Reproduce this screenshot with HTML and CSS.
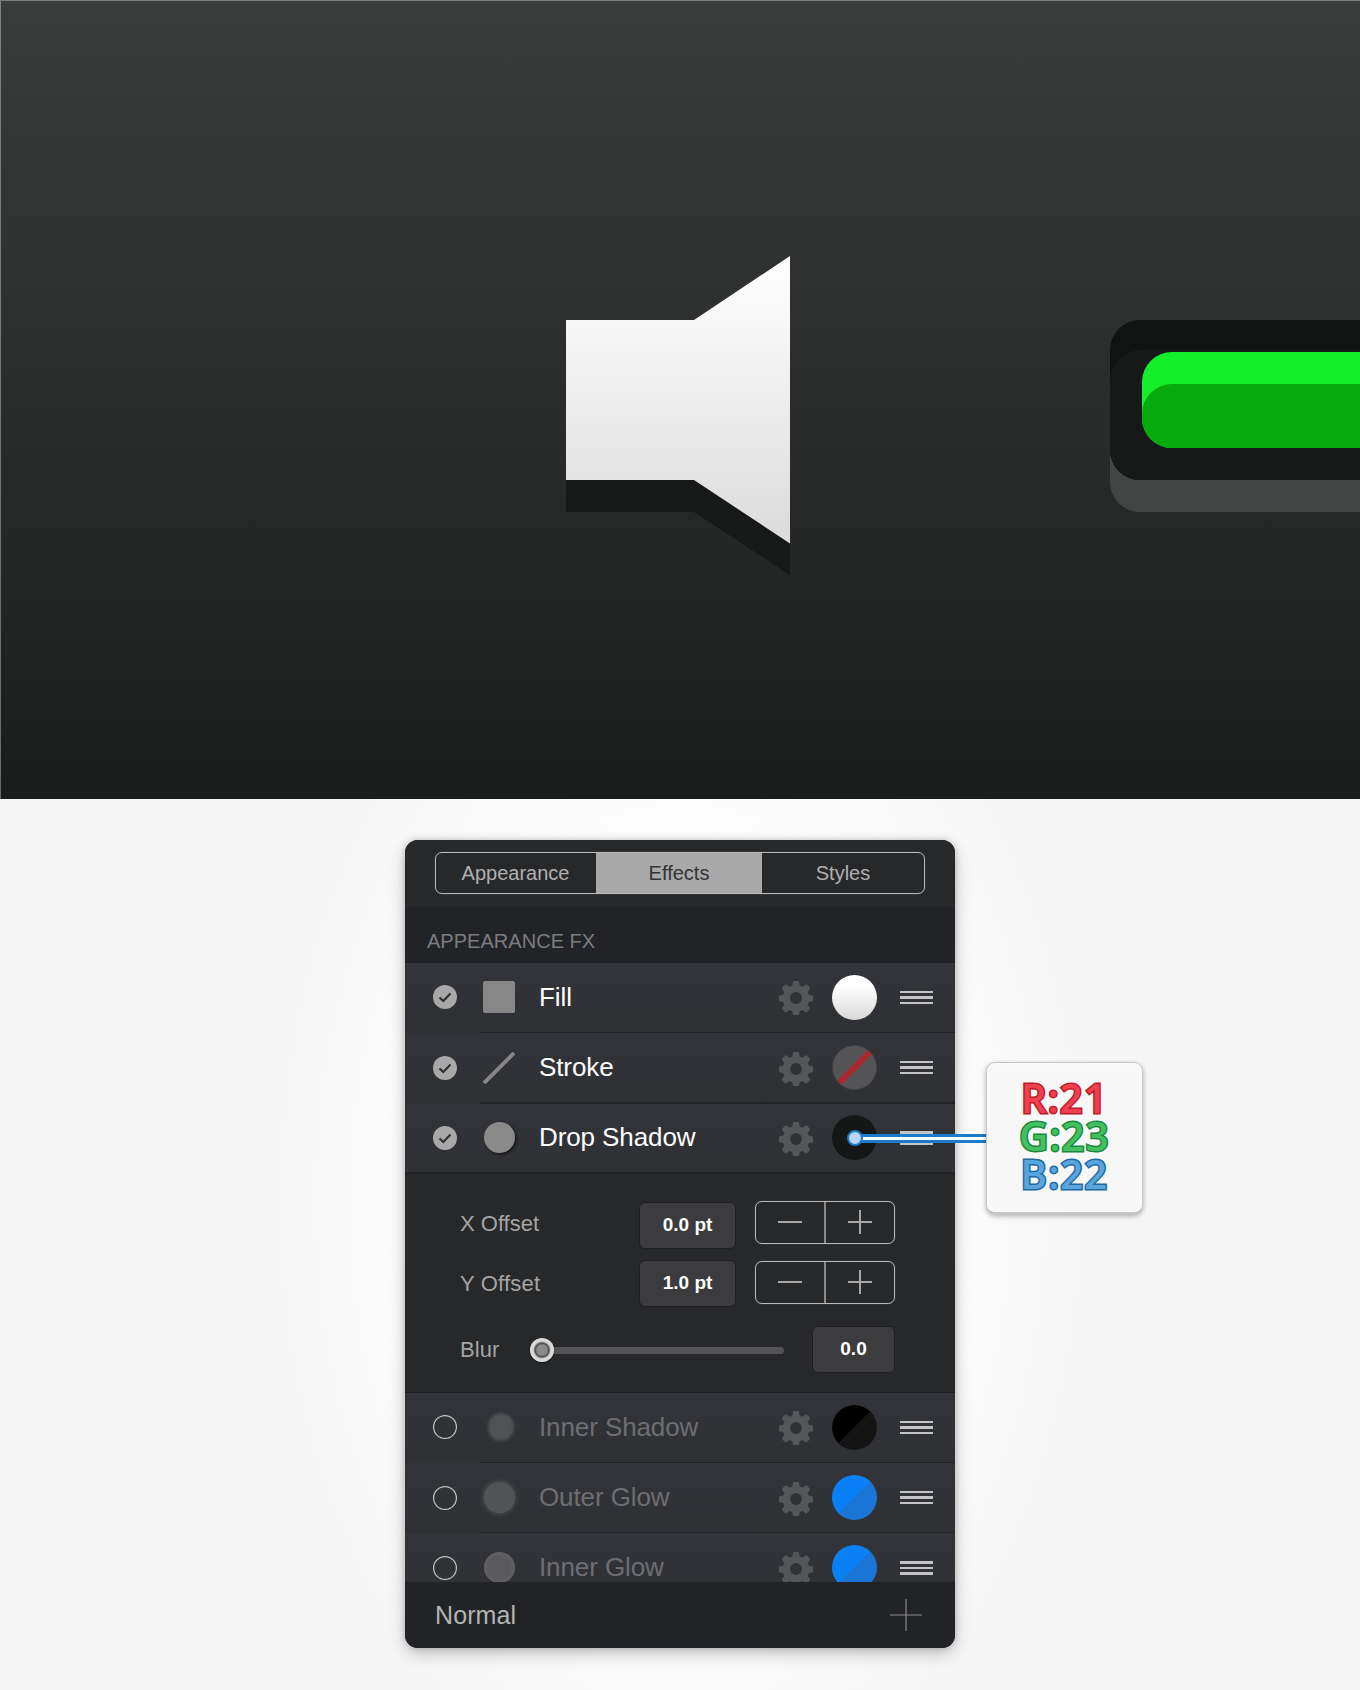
FILE: index.html
```html
<!DOCTYPE html>
<html lang="en">
<head>
<meta charset="utf-8">
<title>Appearance FX</title>
<link rel="stylesheet" href="styles.css">
</head>
<body>
<svg width="0" height="0" class="defs">
  <defs>
    <path id="gear" d="M14.2 0h5.6l.9 4.6 2.8 1.1 3.9-2.6 3.9 3.9-2.6 3.9 1.2 2.8 4.6.9v5.6l-4.6.9-1.2 2.8 2.6 3.9-3.9 3.9-3.9-2.6-2.8 1.1-.9 4.6h-5.6l-.9-4.6-2.8-1.1-3.9 2.6-3.9-3.9 2.6-3.9-1.2-2.8-4.6-.9v-5.6l4.6-.9 1.2-2.8-2.6-3.9 3.9-3.9 3.9 2.6 2.8-1.1zM17 11a6 6 0 1 0 0 12 6 6 0 0 0 0-12z" fill-rule="evenodd"/>
  </defs>
</svg>

<header class="hero">
  <svg class="hero-art" width="1360" height="799" viewBox="0 0 1360 799">
    <defs>
      <linearGradient id="speaker" gradientUnits="userSpaceOnUse" x1="0" y1="256" x2="0" y2="544">
        <stop offset="0" stop-color="#ffffff"/>
        <stop offset="1" stop-color="#dbdbdb"/>
      </linearGradient>
    </defs>
    <path fill="#171918" d="M566 352H694L790 288V575L694 512H566Z"/>
    <path fill="url(#speaker)" d="M566 320H694L790 256V543.500L694 480H566Z"/>
    <rect x="1110" y="352" width="290" height="160" rx="30" fill="#434544"/>
    <rect x="1110" y="320" width="290" height="160" rx="30" fill="#111313"/>
    <rect x="1110" y="350" width="290" height="130" rx="30" fill="#171918"/>
    <rect x="1142" y="352" width="260" height="96" rx="30" fill="#15ee2a"/>
    <rect x="1142" y="384" width="260" height="64" rx="30" fill="#05aa0c"/>
  </svg>
</header>

<main class="stage">
  <section class="panel">
    <nav class="tabs-band">
      <div class="tabs">
        <span class="tab tab-first">Appearance</span>
        <span class="tab tab-active">Effects</span>
        <span class="tab tab-last">Styles</span>
      </div>
    </nav>
    <h2 class="section-title">APPEARANCE FX</h2>

    <div class="rows">
      <div class="row">
        <svg class="toggle" viewBox="0 0 24 24"><circle cx="12" cy="12" r="12" fill="#a8a8a8"/><path d="M6.500 12.500l3.800 3.500 7.200-7.500" fill="none" stroke="#303136" stroke-width="2.200"/></svg>
        <span class="glyph"><span class="glyph-square"></span></span>
        <span class="row-name">Fill</span>
        <svg class="gear" viewBox="0 0 34 34"><use href="#gear"/></svg>
        <span class="swatch swatch-white"></span>
        <span class="grip"><i></i><i></i><i></i></span>
      </div>
      <div class="row">
        <svg class="toggle" viewBox="0 0 24 24"><circle cx="12" cy="12" r="12" fill="#a8a8a8"/><path d="M6.500 12.500l3.800 3.500 7.200-7.500" fill="none" stroke="#303136" stroke-width="2.200"/></svg>
        <span class="glyph"><svg class="glyph-line" viewBox="0 0 32 32"><path d="M1 31L31 1" stroke="#868686" stroke-width="4"/></svg></span>
        <span class="row-name">Stroke</span>
        <svg class="gear" viewBox="0 0 34 34"><use href="#gear"/></svg>
        <span class="swatch swatch-none"></span>
        <span class="grip"><i></i><i></i><i></i></span>
      </div>
      <div class="row row-open">
        <svg class="toggle" viewBox="0 0 24 24"><circle cx="12" cy="12" r="12" fill="#a8a8a8"/><path d="M6.500 12.500l3.800 3.500 7.200-7.500" fill="none" stroke="#303136" stroke-width="2.200"/></svg>
        <span class="glyph"><span class="glyph-dot glyph-dot-shadow"></span></span>
        <span class="row-name">Drop Shadow</span>
        <svg class="gear" viewBox="0 0 34 34"><use href="#gear"/></svg>
        <span class="swatch swatch-black"></span>
        <span class="grip"><i></i><i></i><i></i></span>
      </div>
    </div>

    <div class="details">
      <div class="field field-x">
        <span class="field-label">X Offset</span>
        <span class="value value-pt">0.0 pt</span>
        <span class="stepper">
          <span class="step"><svg viewBox="0 0 24 24"><path d="M0 12H24" stroke="#a8a8a8" stroke-width="2"/></svg></span>
          <span class="step"><svg viewBox="0 0 24 24"><path d="M0 12H24M12 0V24" stroke="#a8a8a8" stroke-width="2"/></svg></span>
        </span>
      </div>
      <div class="field field-y">
        <span class="field-label">Y Offset</span>
        <span class="value value-pt">1.0 pt</span>
        <span class="stepper">
          <span class="step"><svg viewBox="0 0 24 24"><path d="M0 12H24" stroke="#a8a8a8" stroke-width="2"/></svg></span>
          <span class="step"><svg viewBox="0 0 24 24"><path d="M0 12H24M12 0V24" stroke="#a8a8a8" stroke-width="2"/></svg></span>
        </span>
      </div>
      <div class="field field-blur">
        <span class="field-label field-label-short">Blur</span>
        <span class="slider"><span class="knob"></span></span>
        <span class="value value-blur">0.0</span>
      </div>
    </div>

    <div class="rows rows-off">
      <div class="row">
        <svg class="toggle" viewBox="0 0 24 24"><circle cx="12" cy="12" r="11.400" fill="none" stroke="#c4c4c4" stroke-width="1.200"/></svg>
        <span class="glyph"><span class="glyph-dot glyph-dot-inner"></span></span>
        <span class="row-name">Inner Shadow</span>
        <svg class="gear" viewBox="0 0 34 34"><use href="#gear"/></svg>
        <span class="swatch swatch-split-black"></span>
        <span class="grip"><i></i><i></i><i></i></span>
      </div>
      <div class="row">
        <svg class="toggle" viewBox="0 0 24 24"><circle cx="12" cy="12" r="11.400" fill="none" stroke="#c4c4c4" stroke-width="1.200"/></svg>
        <span class="glyph"><span class="glyph-dot glyph-dot-outer"></span></span>
        <span class="row-name">Outer Glow</span>
        <svg class="gear" viewBox="0 0 34 34"><use href="#gear"/></svg>
        <span class="swatch swatch-blue"></span>
        <span class="grip"><i></i><i></i><i></i></span>
      </div>
      <div class="row">
        <svg class="toggle" viewBox="0 0 24 24"><circle cx="12" cy="12" r="11.400" fill="none" stroke="#c4c4c4" stroke-width="1.200"/></svg>
        <span class="glyph"><span class="glyph-dot glyph-dot-glow"></span></span>
        <span class="row-name">Inner Glow</span>
        <svg class="gear" viewBox="0 0 34 34"><use href="#gear"/></svg>
        <span class="swatch swatch-blue"></span>
        <span class="grip"><i></i><i></i><i></i></span>
      </div>
    </div>

    <footer class="panel-footer">
      <span class="blend">Normal</span>
      <svg class="add" viewBox="0 0 32 32"><path d="M0 16H32M16 0V32" stroke="#8c8c8c" stroke-width="1.200"/></svg>
    </footer>

    <div class="connector"><span class="connector-dot"></span></div>
    <aside class="callout">
      <span class="rgb rgb-r">R:21</span>
      <span class="rgb rgb-g">G:23</span>
      <span class="rgb rgb-b">B:22</span>
    </aside>
  </section>
</main>
</body>
</html>
```

FILE: styles.css
```css
* { box-sizing: border-box; }
html, body { margin: 0; padding: 0; }
body {
  width: 1360px;
  height: 1690px;
  overflow: hidden;
  font-family: "Liberation Sans", Arial, sans-serif;
  background: #f5f5f5;
}
.defs { display: block; height: 0; }

.hero {
  height: 799px;
  background: linear-gradient(#3a3c3b 0, #1b1c1c 100%);
  overflow: hidden;
  position: relative;
}
.hero::after {
  content: "";
  position: absolute;
  inset: 0;
  box-shadow: inset 1px 1px 0 rgba(255, 255, 255, .35);
}
.hero-art { display: block; }

.stage {
  height: 891px;
  padding-top: 41px;
  background: radial-gradient(ellipse 420px 640px at 50% 45%, #ffffff 45%, #f5f5f5 100%);
}

.panel {
  position: relative;
  width: 550px;
  height: 808px;
  margin: 0 auto;
  display: flex;
  flex-direction: column;
  border-radius: 13px;
  background: #242528;
  box-shadow: 0 6px 16px rgba(0, 0, 0, .22), 0 0 6px rgba(0, 0, 0, .18);
}

.tabs-band {
  height: 67px;
  flex: none;
  padding: 12px 30px 0;
  background: #27282a;
  border-radius: 13px 13px 0 0;
}
.tabs {
  display: flex;
  height: 42px;
  border: 1px solid #b8b8b8;
  box-shadow: 0 0 1px rgba(170, 170, 170, .8);
  border-radius: 7px;
  overflow: hidden;
  font-size: 20px;
  color: #b0b0b0;
}
.tab {
  display: flex;
  align-items: center;
  justify-content: center;
  flex: none;
}
.tab-first { width: 160px; padding-right: 1px; }
.tab-active { width: 166px; background: #a9a9a9; color: #333437; }
.tab-last { flex: 1; }

.section-title {
  margin: 0;
  height: 56px;
  flex: none;
  padding: 22px 0 0 22px;
  font-size: 20px;
  font-weight: 400;
  line-height: 24px;
  letter-spacing: .03px;
  color: #7c7d80;
  background: #222326;
  border-bottom: 1px solid #1d1e21;
}

.rows { flex: none; background: #303136; }
.rows-off {
  flex: 1;
  min-height: 0;
  overflow: hidden;
}
.row {
  position: relative;
  display: flex;
  align-items: center;
  height: 70.300px;
  padding: 0 22px 1.500px 28px;
  color: #ffffff;
  font-size: 26px;
  background: linear-gradient(#333439, #2f3034);
}
.row::after {
  content: "";
  position: absolute;
  left: 75px;
  right: 0;
  bottom: 0;
  height: 1.500px;
  background: #212225;
}
.row-open::after { left: 0; }
.rows-off .row { color: #6d6e71; }

.toggle { width: 24px; height: 24px; flex: none; }
.glyph {
  width: 32px;
  height: 32px;
  margin-left: 26px;
  flex: none;
  display: flex;
  align-items: center;
  justify-content: center;
}
.glyph-square {
  width: 32px;
  height: 32px;
  border-radius: 2px;
  background: #878787;
}
.glyph-line { width: 32px; height: 32px; display: block; }
.glyph-dot {
  width: 31px;
  height: 31px;
  border-radius: 50%;
  flex: none;
}
.glyph-dot-shadow { background: #8a8a8a; box-shadow: 1.500px 1.500px 3px rgba(0, 0, 0, .6); }
.glyph-dot-inner { width: 26px; height: 28px; margin-left: 4px; background: #515256; filter: blur(1.500px); }
.glyph-dot-outer { background: #525356; box-shadow: 0 0 5px 1px rgba(90, 90, 94, .7); }
.glyph-dot-glow { background: radial-gradient(circle, #5a5a5c 50%, #6d6d6f 100%); }

.row-name { margin-left: 24px; flex: 1; line-height: 30px; letter-spacing: -.1px; padding-bottom: 1px; }

.gear { width: 34px; height: 34px; flex: none; fill: #55565a; margin-top: 2px; }

.swatch {
  width: 45px;
  height: 45px;
  margin-left: 19px;
  border-radius: 50%;
  flex: none;
}
.swatch-white { background: linear-gradient(#ffffff 25%, #d8d8d8); }
.swatch-none {
  border: 1px solid #444549;
  background: linear-gradient(135deg, #555558 45%, #a82a2e 45%, #a82a2e 55%, #555558 55%);
}
.swatch-black { background: #151616; }
.swatch-split-black { background: linear-gradient(135deg, #000000 50%, #141415 50%); }
.swatch-blue { background: linear-gradient(135deg, #0a80f7 50%, #1a75d6 50%); }

.grip {
  width: 33px;
  margin-left: 23px;
  flex: none;
  display: flex;
  flex-direction: column;
  gap: 3px;
}
.grip i { display: block; height: 2.500px; background: #c4c4c4; }

.details {
  height: 219px;
  flex: none;
  position: relative;
  padding: 27px 0 0 55px;
  background: #27282a;
  border-bottom: 1px solid #1d1e21;
  color: #a4a4a4;
  font-size: 22px;
}
.field { display: flex; align-items: flex-start; }
.field-x { height: 60px; }
.field-y { height: 66px; }
.field-label { width: 179px; line-height: 46px; flex: none; }
.field-y .field-label { letter-spacing: .2px; }
.field-label-short { width: 82px; line-height: 46px; letter-spacing: .1px; }
.value {
  display: flex;
  align-items: center;
  justify-content: center;
  height: 47px;
  flex: none;
  background: #3c3c3e;
  border: 1px solid #1f1f21;
  border-radius: 6px;
  color: #ffffff;
  font-size: 19px;
  font-weight: 700;
  padding-bottom: 1px;
}
.value-pt { width: 97px; }
.field-x .value-pt { margin-top: 1px; }
.field-y .value-pt { margin-top: -1px; }
.value-blur { width: 83px; margin-left: 28px; margin-top: -1px; }
.stepper {
  display: flex;
  width: 140px;
  height: 43px;
  margin-left: 19px;
  border: 1px solid #b8b8b8;
  box-shadow: 0 0 1px rgba(170, 170, 170, .8);
  border-radius: 7px;
  flex: none;
}
.step {
  flex: 1;
  display: flex;
  align-items: center;
  justify-content: center;
}
.step + .step { border-left: 2px solid #8a8a8a; }
.step svg { width: 24px; height: 24px; display: block; }

.slider {
  position: relative;
  display: block;
  width: 242px;
  height: 7px;
  margin-top: 20px;
  flex: none;
  border-radius: 4px;
  background: #545456;
}
.knob {
  position: absolute;
  left: -12px;
  top: -8.500px;
  width: 24px;
  height: 24px;
  border-radius: 50%;
  background: radial-gradient(circle, #8a8a8a 0, #8a8a8a 30%, #4a4a4a 40%, #d4d4d4 52%, #efefef 100%);
  box-shadow: 0 1px 2px rgba(0, 0, 0, .5);
}

.panel-footer {
  height: 66px;
  flex: none;
  display: flex;
  align-items: center;
  justify-content: space-between;
  padding: 0 33px 0 30px;
  background: #222326;
  border-radius: 0 0 13px 13px;
  position: relative;
}
.blend { font-size: 25px; letter-spacing: .1px; color: #b4b4b4; }
.add { width: 32px; height: 32px; display: block; }

.connector {
  position: absolute;
  left: 450px;
  top: 293.500px;
  width: 131px;
  height: 9px;
  border-top: 3px solid #1b7ac9;
  border-bottom: 3px solid #1b7ac9;
  background: #ffffff;
}
.connector-dot {
  position: absolute;
  left: -8px;
  top: -6.500px;
  width: 16px;
  height: 16px;
  border-radius: 50%;
  border: 2.500px solid #1b7ac9;
  background: #b9d5fa;
}

.callout {
  position: absolute;
  left: 581px;
  top: 222px;
  width: 157px;
  height: 152px;
  padding-bottom: 3px;
  display: flex;
  flex-direction: column;
  align-items: center;
  justify-content: center;
  border: 1.500px solid #c6c6c6;
  border-bottom-width: 2px;
  border-radius: 9px;
  background: #f7f7f7;
  box-shadow: 0 2px 5px rgba(0, 0, 0, .3), inset 0 0 4px #ffffff;
  font-family: "Open Sans", "Liberation Sans", sans-serif;
  font-size: 40px;
  font-weight: 600;
  line-height: 38px;
  letter-spacing: 1.200px;
}
.rgb { display: block; paint-order: stroke fill; -webkit-text-stroke-width: 3px; }
.rgb-r { color: #f0404e; -webkit-text-stroke-color: #bb1c2b; }
.rgb-g { color: #45c060; -webkit-text-stroke-color: #178a3d; }
.rgb-b { color: #5aa5dc; -webkit-text-stroke-color: #1f69a6; }
```
